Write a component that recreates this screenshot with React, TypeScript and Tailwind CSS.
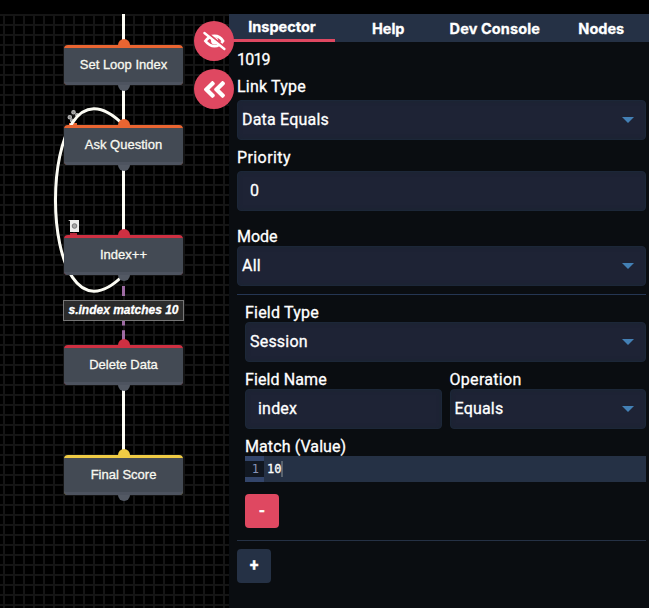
import React from "react";
import { FaAngleDoubleLeft } from "react-icons/fa";

type NodeProps = { label: string; top: string; accent: string };

function FlowNode({ label, top, accent }: NodeProps) {
  return (
    <div className={`absolute left-[64px] h-[40px] w-[119px] ${top}`}>
      <div className={`absolute -top-[6px] left-[53.5px] size-[12px] rounded-full ${accent}`} />
      <div className="absolute -bottom-[6px] left-[53.5px] size-[12px] rounded-full bg-[#535964]" />
      <div className={`absolute inset-0 overflow-hidden rounded-[4px] ${accent}`}>
        <div className="mt-[2.5px] flex h-[37.5px] items-center justify-center border-b-[3px] border-[#4d535f] bg-[#434a54] font-['Liberation_Sans',Arial,sans-serif] text-[13px] text-[#f8f8f0]">
          <span className="whitespace-nowrap [-webkit-text-stroke:0.3px_#f8f8f0]">{label}</span>
        </div>
      </div>
    </div>
  );
}

function EyeOff() {
  return (
    <svg viewBox="0 0 24 20" className="h-5 w-6" fill="none">
      <path d="M3.4 10Q7 5 12.5 5T21 10Q17.6 15.2 12.5 15.2T3.4 10Z" stroke="white" strokeWidth="2.8" />
      <circle cx="12.6" cy="9.8" r="3.6" fill="white" />
      <path d="M3.2 0.2L23.6 16.8" stroke="#df4861" strokeWidth="2.2" />
      <path d="M2.4 2L22.4 18" stroke="white" strokeWidth="2.3" strokeLinecap="round" />
    </svg>
  );
}

function Label({ children, className = "" }: { children: React.ReactNode; className?: string }) {
  return (
    <div className={`h-5 whitespace-nowrap pt-px text-[16px] leading-5 ${className}`}>{children}</div>
  );
}

function Field({ value, select = false, className = "" }: { value: string; select?: boolean; className?: string }) {
  return (
    <div
      className={`flex h-10 items-center justify-between rounded-[4px] border border-[#1c2738] bg-[#1e2335] pr-[11px] text-[16px] shadow-[inset_0_0_4px_#1a2432] ${select ? "pl-1" : "pl-3"} ${className}`}
    >
      <span className="whitespace-nowrap tracking-[0.2px]">{value}</span>
      {select && <span className="h-0 w-0 border-x-[6px] border-t-[6px] border-x-transparent border-t-[#4380b5]" />}
    </div>
  );
}

export default function App() {
  return (
    <div className="flex h-[608px] w-[649px] flex-col overflow-hidden bg-black pt-[14px] font-[Roboto,sans-serif] text-white [-webkit-text-stroke:0.3px_white]">
      <div className="flex h-[594px]">
        <div className="relative h-full w-[229px] shrink-0 bg-[linear-gradient(#151515_2px,transparent_2px),linear-gradient(90deg,#151515_2px,transparent_2px)] bg-[length:10px_10px] bg-[position:0_0,3px_0]">
          <svg className="absolute -top-[14px] left-0" width="229" height="608" fill="none">
            <g fill="#8f8f8f" stroke="#b5b5b5" strokeWidth="1.2">
              <circle cx="69.8" cy="117.2" r="1.7" />
              <circle cx="73.5" cy="112.3" r="1.7" />
              <circle cx="77" cy="115" r="1.4" />
              <circle cx="72" cy="120.5" r="1.5" />
            </g>
            <path d="M69 123h8v2.5h-8z" fill="#e96532" />
            <path d="M68 220h11v12h-9v-11z" fill="#eeeeec" />
            <circle cx="74.5" cy="226" r="2.3" fill="#aaa" stroke="#777" />
            <path d="M70 233h7v3h-7z" fill="#b92b3c" />
            <g stroke="#fcfcf4" strokeWidth="3">
              <path d="M123.5 14V45M123.5 85V125M123.5 165V235M123.5 385V455" />
              <path d="M123.5 275C32.8 367 32.8 33 123.5 125" />
            </g>
            <path d="M123.5 286V345" stroke="#9d6ba3" strokeWidth="3" strokeDasharray="10 4.75" />
          </svg>
          <FlowNode label="Set Loop Index" top="top-[31px]" accent="bg-[#e96532]" />
          <FlowNode label="Ask Question" top="top-[111px]" accent="bg-[#e96532]" />
          <FlowNode label="Index++" top="top-[221px]" accent="bg-[#ce3042]" />
          <FlowNode label="Delete Data" top="top-[331px]" accent="bg-[#ce3042]" />
          <FlowNode label="Final Score" top="top-[441px]" accent="bg-[#efcb45]" />
          <div className="absolute left-[63px] top-[286px] flex h-[21px] w-[121px] items-center justify-center whitespace-nowrap border border-[#777] bg-[#2b2b2b] pb-px font-['Liberation_Sans',Arial,sans-serif] text-[12px] font-bold italic">
            s.index matches 10
          </div>
          <button className="absolute left-[194px] top-[7px] z-10 flex size-10 items-center justify-center rounded-full bg-[#df4861]">
            <EyeOff />
          </button>
          <button className="absolute left-[194px] top-[55px] z-10 flex size-10 items-center justify-center rounded-full bg-[#df4861]">
            <FaAngleDoubleLeft className="size-[27px]" />
          </button>
        </div>

        <div className="w-[420px] overflow-hidden bg-[#0a0d11]">
          <div className="flex h-7 w-[426px] bg-[#253145] font-[Inter,sans-serif] text-[14.5px] font-bold">
            <div className="flex w-[106px] items-center justify-center border-b-[3px] border-[#df4861]">Inspector</div>
            <div className="flex w-[106.5px] items-center justify-center pt-0.5">Help</div>
            <div className="flex w-[106.5px] items-center justify-center pt-0.5 tracking-[0.1px]">Dev Console</div>
            <div className="flex w-[106.5px] items-center justify-center pt-0.5">Nodes</div>
          </div>

          <div className="flex flex-col pl-2 pr-[3px]">
            <Label className="mt-[7px] tracking-[-0.8px]">1019</Label>
            <Label className="mt-[7px] tracking-[0.2px]">Link Type</Label>
            <Field value="Data Equals" select className="mt-[4px]" />
            <Label className="mt-[7px] tracking-[0.4px]">Priority</Label>
            <Field value="0" className="mt-[4px]" />
            <Label className="mt-[15px]">Mode</Label>
            <Field value="All" select />
            <div className="mt-2 h-px bg-[#253653]" />
            <div className="flex flex-col pl-2">
              <Label className="mt-[7px] tracking-[0.2px]">Field Type</Label>
              <Field value="Session" select />
              <div className="mt-[7px] grid grid-cols-[196.5px_196.5px] gap-x-2">
                <div>
                  <Label className="tracking-[0.1px]">Field Name</Label>
                  <Field value="index" />
                </div>
                <div>
                  <Label className="tracking-[0.3px]">Operation</Label>
                  <Field value="Equals" select />
                </div>
              </div>
              <Label className="mt-[7px] tracking-[0.1px]">Match (Value)</Label>
              <div className="flex h-[26px] items-center bg-[#253145] font-['DejaVu_Sans_Mono',monospace] text-[12px]">
                <div className="flex h-full w-[19px] items-center bg-[#33456a]">
                  <span className="h-4 w-full bg-[#111721] pr-[5px] text-right leading-4 text-[#8794b8] [-webkit-text-stroke:0]">1</span>
                </div>
                <span className="ml-[3px] h-4 border-r-2 border-[#59636f] leading-4">10</span>
              </div>
              <button className="mt-3 size-[34px] rounded-[4px] bg-[#df4861] text-[16px] font-bold">-</button>
            </div>
            <div className="mt-3 h-px bg-[#253145]" />
            <button className="mt-2 size-[34px] rounded-[4px] bg-[#253145] text-[16px] font-bold">+</button>
          </div>
        </div>
      </div>
    </div>
  );
}
